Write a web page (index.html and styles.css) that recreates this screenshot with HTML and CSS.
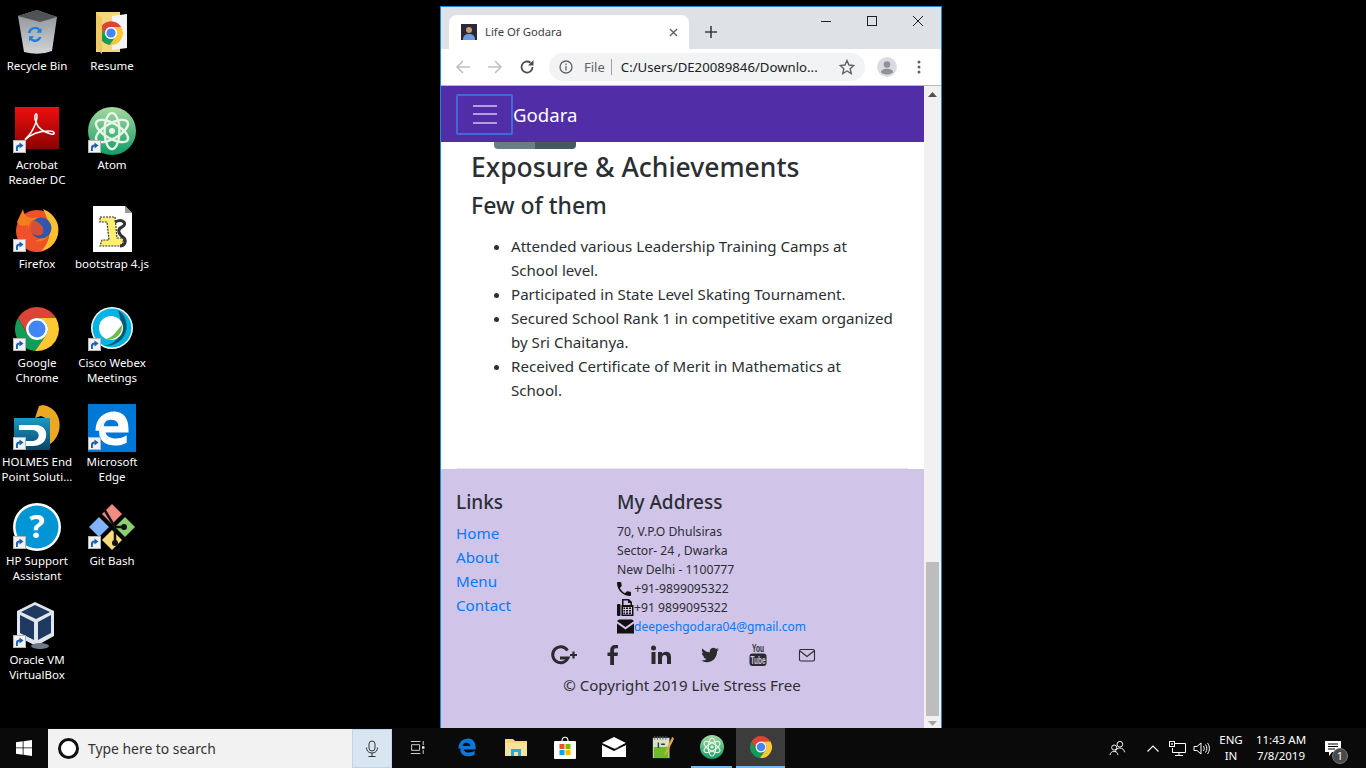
FILE: index.html
```html
<!DOCTYPE html>
<html lang="en">
  <head>
    <meta charset="UTF-8" />
    <title>Life Of Godara</title>
    <link rel="stylesheet" href="styles.css">
  </head>
  <body>
    <svg class="defs" width="0" height="0">
      <defs>
        <linearGradient id="atomGreen" x1="0" y1="0" x2="0" y2="1"><stop offset="0" stop-color="#a5d8a0"/><stop offset="1" stop-color="#0f9d68"/></linearGradient>
        <linearGradient id="pdfRed" x1="0" y1="0" x2="0" y2="1"><stop offset="0" stop-color="#f00d0d"/><stop offset="1" stop-color="#8a0202"/></linearGradient>
        <linearGradient id="binGray" x1="0" y1="0" x2="0" y2="1"><stop offset="0" stop-color="#8b8f92"/><stop offset="1" stop-color="#d3d6d8"/></linearGradient>
        <linearGradient id="holmesBlue" x1="0" y1="0" x2="0" y2="1"><stop offset="0" stop-color="#1b9ac4"/><stop offset="1" stop-color="#0c4468"/></linearGradient>
        <symbol id="chrome" viewBox="0 0 48 48">
          <path fill="#db4437" d="M5 13A22 22 0 0 1 43 13H24A11 11 0 0 0 14.500 29.500Z"/>
          <path fill="#0f9d58" d="M5 13A22 22 0 0 0 22 46L33.500 29.500A11 11 0 0 1 14.500 29.500Z"/>
          <path fill="#fcc934" d="M43 13A22 22 0 0 1 22 46L33.500 29.500A11 11 0 0 0 24 13Z"/>
          <circle cx="24" cy="24" r="11" fill="#fff"/>
          <circle cx="24" cy="24" r="8.500" fill="#4285f4"/>
        </symbol>
        <symbol id="atom" viewBox="0 0 48 48">
          <circle cx="24" cy="24" r="24" fill="url(#atomGreen)"/>
          <g fill="none" stroke="#e6f5e6" stroke-width="2.400">
            <ellipse cx="24" cy="24" rx="18" ry="7.500" transform="rotate(30 24 24)"/>
            <ellipse cx="24" cy="24" rx="18" ry="7.500" transform="rotate(-30 24 24)"/>
            <ellipse cx="24" cy="24" rx="18" ry="7.500" transform="rotate(90 24 24)"/>
          </g>
          <circle cx="24" cy="24" r="3" fill="#e6f5e6"/>
        </symbol>
        <symbol id="edge-e" viewBox="0 0 48 48">
          <path d="M6 27C6 13 16 6 26 6c10 0 16 7 16 19v4H17c1 7 14 9 23 3v8c-11 6-30 4-30-11 0-6 3-10 8-13-2 2-3 4-3 6h16c0-4-3-7-8-7-6 0-12 5-13 12z"/>
        </symbol>
        <symbol id="shortcut" viewBox="0 0 13 13">
          <rect width="13" height="13" fill="#f2f2f2"/>
          <rect x=".5" y=".5" width="12" height="12" fill="none" stroke="#b5b5b5"/>
          <path d="M3 11V7.500C3 5.500 4.500 4.500 6.500 4.500V2.500L10.500 5.500 6.500 8.500V6.500C5.500 6.500 4.500 7.500 5 11Z" fill="#1b5fb0"/>
        </symbol>
      </defs>
    </svg>

    <div class="desktop">
      <div class="desk-icon">
        <div class="desk-pic">
          <svg viewBox="0 0 48 48"><path d="M5 8 24 2 44 9 39 43Q26 48 11 44Z" fill="url(#binGray)"/><path d="M5 8 24 2 44 9 27 14Z" fill="#4f5356"/><path d="M15 23a8 8 0 0 1 13-5l-3 4h8v-8l-2 2a12 12 0 0 0-20 6zM18 32l3-4h-8v8l2-2a11 11 0 0 0 18-5h-4a8 8 0 0 1-11 3z" fill="#1a7fe0" transform="translate(8 11) scale(.62)"/></svg>
        </div>
        <span>Recycle Bin</span>
      </div>
      <div class="desk-icon">
        <div class="desk-pic">
          <svg viewBox="0 0 48 48"><path d="M8 4H32V44H8Z" fill="#f5d67d"/><path d="M24 8 39 6V40L24 42Z" fill="#f4f4f4"/><use href="#chrome" x="10" y="12" width="26" height="26"/><path d="M8 4 14 10V46L8 40Z" fill="#f0c860"/></svg>
        </div>
        <span>Resume</span>
      </div>
      <div class="desk-icon">
        <div class="desk-pic">
          <svg viewBox="0 0 48 48"><rect width="44" height="42" x="0" y="0" fill="url(#pdfRed)" transform="translate(2 0)"/><path d="M12 32C18 28 24 16 24 9 24 4 20 8 23 15 25 21 30 25 38 27 43 28 42 24 36 24 28 24 19 26 12 33" fill="none" stroke="#fff" stroke-width="1.500"/></svg>
          <svg class="shortcut"><use href="#shortcut"/></svg>
        </div>
        <span>Acrobat<br>Reader DC</span>
      </div>
      <div class="desk-icon">
        <div class="desk-pic">
          <svg viewBox="0 0 48 48"><use href="#atom"/></svg>
          <svg class="shortcut"><use href="#shortcut"/></svg>
        </div>
        <span>Atom</span>
      </div>
      <div class="desk-icon">
        <div class="desk-pic">
          <svg viewBox="0 0 48 48"><circle cx="24" cy="25" r="21" fill="#f0502a"/><path d="M30 3C42 8 47 18 45 28 43 38 36 43 28 45 38 36 40 22 30 3Z" fill="#fbc02d"/><path d="M4 16 10 3C11 9 14 12 20 12 30 10 38 16 37 26 36 33 28 37 22 35 30 33 31 27 26 25 20 24 14 26 15 19 9 21 5 19 4 16Z" fill="#f57c1f"/><circle cx="28" cy="22" r="10.500" fill="#3057b0"/><path d="M20 14C26 16 32 20 30 27 27 31 20 30 16 24 15 19 17 16 20 14Z" fill="#f04e23" opacity=".85"/></svg>
          <svg class="shortcut"><use href="#shortcut"/></svg>
        </div>
        <span>Firefox</span>
      </div>
      <div class="desk-icon">
        <div class="desk-pic">
          <svg viewBox="0 0 48 48"><path d="M5 0H37L44 7V46H5Z" fill="#fff"/><path d="M37 0V7H44Z" fill="#9a9a9a"/><path d="M12 11H27L29 32 36 32 34 40H12L14 34 21 34 19 16H12Z" fill="#ffee70" stroke="#333" stroke-width="1.200" stroke-dasharray="2 1"/><path d="M27 16C35 12 40 18 34 21 29 23 30 28 36 32 39 36 36 40 32 40" fill="none" stroke="#333" stroke-width="3"/></svg>
        </div>
        <span>bootstrap 4.js</span>
      </div>
      <div class="desk-icon">
        <div class="desk-pic">
          <svg viewBox="0 0 48 48"><use href="#chrome"/></svg>
          <svg class="shortcut"><use href="#shortcut"/></svg>
        </div>
        <span>Google<br>Chrome</span>
      </div>
      <div class="desk-icon">
        <div class="desk-pic">
          <svg viewBox="0 0 48 48"><circle cx="24" cy="23" r="21" fill="#fff"/><circle cx="24" cy="23" r="19.500" fill="#00b4e4"/><path d="M30 5A19.500 19.500 0 0 1 14 40C28 42 38 28 30 5Z" fill="#075a70"/><circle cx="23" cy="23" r="12" fill="#fff"/><path d="M34 20C35 30 26 37 15 34 25 34 28 26 34 20Z" fill="#6cbb45"/></svg>
          <svg class="shortcut"><use href="#shortcut"/></svg>
        </div>
        <span>Cisco Webex<br>Meetings</span>
      </div>
      <div class="desk-icon">
        <div class="desk-pic">
          <svg viewBox="0 0 48 48"><path d="M30 1C46 4 50 20 44 32 40 40 32 44 26 44L34 32C38 24 36 14 28 12L22 14 26 2Z" fill="#eda823"/><rect x="1" y="14" width="36" height="32" fill="url(#holmesBlue)"/><path d="M6 21H22C32 21 34 28 33 33 32 39 26 42 20 42H12V37H19C28 37 28 26 19 26H6Z" fill="#fff"/></svg>
          <svg class="shortcut"><use href="#shortcut"/></svg>
        </div>
        <span>HOLMES End<br>Point Soluti...</span>
      </div>
      <div class="desk-icon">
        <div class="desk-pic">
          <svg viewBox="0 0 48 48"><rect width="48" height="48" fill="#0078d7"/><use href="#edge-e" fill="#fff" x="2" y="2" width="44" height="44"/></svg>
          <svg class="shortcut"><use href="#shortcut"/></svg>
        </div>
        <span>Microsoft<br>Edge</span>
      </div>
      <div class="desk-icon">
        <div class="desk-pic">
          <svg viewBox="0 0 48 48"><circle cx="24" cy="24" r="24" fill="#fff"/><circle cx="24" cy="24" r="21.500" fill="#0096d6"/><text x="24" y="35" text-anchor="middle" class="hp-mark">?</text></svg>
          <svg class="shortcut"><use href="#shortcut"/></svg>
        </div>
        <span>HP Support<br>Assistant</span>
      </div>
      <div class="desk-icon">
        <div class="desk-pic">
          <svg viewBox="0 0 48 48"><path d="M24 2 34 12 24 22 14 12Z" fill="#f28b82" transform="translate(0 -1)"/><path d="M12 14 22 24 12 34 2 24Z" fill="#7fb2f7" transform="translate(-1 0)"/><path d="M36 14 46 24 36 34 26 24Z" fill="#8bcf72" transform="translate(1 0)"/><path d="M24 26 34 36 24 46 14 36Z" fill="#f7dc7a" transform="translate(0 1)"/><path d="M16 6 27 24V40M27 24 36 24" fill="none" stroke="#111" stroke-width="2.500"/><circle cx="27" cy="40" r="3" fill="#111"/><circle cx="36" cy="24" r="3" fill="#111"/></svg>
          <svg class="shortcut"><use href="#shortcut"/></svg>
        </div>
        <span>Git Bash</span>
      </div>
      <div class="desk-icon">
        <div class="desk-pic">
          <svg viewBox="0 0 48 48"><path d="M22 0 41 9V34L23 44 4 34V9Z" fill="#dfe6ee"/><path d="M22 3 37 10 23 17 8 10Z" fill="#20395e"/><path d="M7 13 21 20V38L7 31ZM25 20 38 13V31L25 38Z" fill="#1f3a60"/><ellipse cx="27" cy="44" rx="9" ry="3" fill="#6d7a88"/></svg>
          <svg class="shortcut"><use href="#shortcut"/></svg>
        </div>
        <span>Oracle VM<br>VirtualBox</span>
      </div>
    </div>

    <div class="browser">
      <div class="tabstrip">
        <div class="tab">
          <svg class="favicon" viewBox="0 0 16 16"><rect width="16" height="16" fill="#2a2a33"/><circle cx="8" cy="6" r="3" fill="#c89a80"/><path d="M2 16C2 11 5 10 8 10s6 1 6 6Z" fill="#6d9be0"/></svg>
          <span class="tab-title">Life Of Godara</span>
          <svg class="tab-close" viewBox="0 0 10 10"><path d="M1 1 9 9M9 1 1 9" stroke="#5f6368" stroke-width="1.500"/></svg>
        </div>
        <svg class="new-tab" viewBox="0 0 12 12"><path d="M6 0V12M0 6H12" stroke="#3c4043" stroke-width="1.600"/></svg>
        <div class="win-controls">
          <svg viewBox="0 0 46 12"><path d="M18 6.500H28" stroke="#222"/></svg>
          <svg viewBox="0 0 46 12"><rect x="18.500" y="1.500" width="9" height="9" fill="none" stroke="#222"/></svg>
          <svg viewBox="0 0 46 12"><path d="M18 1 28 11M28 1 18 11" stroke="#222"/></svg>
        </div>
      </div>
      <div class="toolbar">
        <svg class="tool" viewBox="0 0 16 16"><path d="M15 8H2M8 2 2 8 8 14" fill="none" stroke="#bdc1c6" stroke-width="1.600"/></svg>
        <svg class="tool" viewBox="0 0 16 16"><path d="M1 8H14M8 2 14 8 8 14" fill="none" stroke="#bdc1c6" stroke-width="1.600"/></svg>
        <svg class="tool" viewBox="0 0 16 16"><path d="M13.500 8A5.500 5.500 0 1 1 11.500 3.800" fill="none" stroke="#4a4d50" stroke-width="1.800"/><path d="M14.500 1V6.500H9Z" fill="#4a4d50"/></svg>
        <div class="omnibox">
          <svg class="info" viewBox="0 0 14 14"><circle cx="7" cy="7" r="6" fill="none" stroke="#5f6368" stroke-width="1.300"/><path d="M7 6V10.500M7 3.500V5" stroke="#5f6368" stroke-width="1.300"/></svg>
          <span class="scheme">File</span>
          <span class="omni-sep"></span>
          <span class="url">C:/Users/DE20089846/Downlo...</span>
          <svg class="star" viewBox="0 0 16 16"><path d="M8 1.500 10 6 14.800 6.500 11.200 9.700 12.200 14.500 8 12 3.800 14.500 4.800 9.700 1.200 6.500 6 6Z" fill="none" stroke="#5f6368" stroke-width="1.400"/></svg>
        </div>
        <svg class="avatar" viewBox="0 0 20 20"><circle cx="10" cy="10" r="10" fill="#dadce0"/><circle cx="10" cy="7.500" r="3.300" fill="#8f9296"/><path d="M4 15.500C4 12.500 7 11.800 10 11.800s6 .7 6 3.700C14 17 12 17.500 10 17.500S6 17 4 15.500Z" fill="#8f9296"/></svg>
        <svg class="dots" viewBox="0 0 4 14"><circle cx="2" cy="2" r="1.500" fill="#5f6368"/><circle cx="2" cy="7" r="1.500" fill="#5f6368"/><circle cx="2" cy="12" r="1.500" fill="#5f6368"/></svg>
      </div>
      <div class="viewport">
        <div class="page">
          <nav class="navbar">
            <button class="toggler"><span></span><span></span><span></span></button>
            <span class="brand">Godara</span>
          </nav>
          <div class="pill"><i></i><i></i></div>
          <main class="content">
            <h2>Exposure &amp; Achievements</h2>
            <h3>Few of them</h3>
            <ul>
              <li>Attended various Leadership Training Camps at School level.</li>
              <li>Participated in State Level Skating Tournament.</li>
              <li>Secured School Rank 1 in competitive exam organized by Sri Chaitanya.</li>
              <li>Received Certificate of Merit in Mathematics at School.</li>
            </ul>
          </main>
          <hr class="rule">
          <footer class="footer">
            <div class="foot-cols">
              <div class="foot-links">
                <h5>Links</h5>
                <a href="#">Home</a>
                <a href="#">About</a>
                <a href="#">Menu</a>
                <a href="#">Contact</a>
              </div>
              <div class="foot-address">
                <h5>My Address</h5>
                <p>70, V.P.O Dhulsiras</p>
                <p>Sector- 24 , Dwarka</p>
                <p>New Delhi - 1100777</p>
                <p><svg class="addr-ico" viewBox="3 3 18 18"><path d="M6.620 10.790c1.440 2.830 3.760 5.140 6.590 6.590l2.200-2.200c.27-.27.67-.36 1.020-.24 1.120.37 2.330.57 3.570.57.55 0 1 .45 1 1V20c0 .55-.45 1-1 1-9.390 0-17-7.610-17-17 0-.55.45-1 1-1h3.500c.55 0 1 .45 1 1 0 1.250.2 2.450.57 3.570.11.35.03.74-.25 1.020l-2.200 2.200z"/></svg>&nbsp;+91-9899095322</p>
                <p><svg class="addr-ico wide" viewBox="0 0 17 17"><rect x="0" y="5" width="3.500" height="12" rx="1"/><path d="M5 0H12L15 3V6H16.500V17H4.500V6H5ZM6.500 1.500V6H13.500V4H11V1.500Z" fill-rule="evenodd"/><path d="M6 8H15V15.500H6Z" fill="#d1c4e9"/><path d="M6.500 8.500H8V10H6.500ZM9 8.500H11V10H9ZM12 8.500H14V10H12ZM6.500 11H8V12.500H6.500ZM9 11H11V12.500H9ZM12 11H14V12.500H12ZM6.500 13.500H8V15H6.500ZM9 13.500H11V15H9ZM12 13.500H14V15H12Z"/></svg>+91 9899095322</p>
                <p><svg class="addr-ico wide" viewBox="0 0 17 14"><path d="M0 1.500 2 0H15L17 1.500 8.500 7.500Z"/><path d="M0 4 8.500 10 17 4V14H0Z"/></svg><a href="#">deepeshgodara04@gmail.com</a></p>
              </div>
            </div>
            <div class="socials">
              <svg viewBox="0 0 30 20"><path d="M18.500 5.500A8 8 0 1 0 19 13H11" fill="none" stroke="#292b2c" stroke-width="3"/><path d="M24.500 6.500V13.500M21 10H28" stroke="#292b2c" stroke-width="2.200"/></svg>
              <svg viewBox="0 0 30 20"><path d="M16 20V11H19.500L20 7.500H16V5.500C16 4 16.700 3.300 18 3.300H20V0H17C14 0 12.200 2 12.200 5V7.500H9.500V11H12.200V20Z" fill="#292b2c"/></svg>
              <svg viewBox="0 0 30 20"><circle cx="7.500" cy="3" r="2.500" fill="#292b2c"/><path d="M5.500 7H9.500V19H5.500ZM12 7H16V8.800C17 7.400 18.400 6.700 20 6.700 23.500 6.700 25 8.800 25 12.500V19H21V13C21 11 20.300 10 18.700 10 17 10 16 11.200 16 13V19H12Z" fill="#292b2c"/></svg>
              <svg viewBox="-6 -3 36 30"><path d="M23.953 4.570a10 10 0 01-2.825.775 4.958 4.958 0 002.163-2.723c-.951.555-2.005.959-3.127 1.184a4.920 4.920 0 00-8.384 4.482C7.690 8.095 4.067 6.130 1.640 3.162a4.822 4.822 0 00-.666 2.475c0 1.710.870 3.213 2.188 4.096a4.904 4.904 0 01-2.228-.616v.060a4.923 4.923 0 003.946 4.827 4.996 4.996 0 01-2.212.085 4.936 4.936 0 004.604 3.417 9.867 9.867 0 01-6.102 2.105c-.39 0-.779-.023-1.170-.067a13.995 13.995 0 007.557 2.209c9.053 0 13.998-7.496 13.998-13.985 0-.21 0-.42-.015-.63A9.935 9.935 0 0024 4.590z" fill="#292b2c"/></svg>
              <svg viewBox="0 0 30 22"><text x="15" y="8" text-anchor="middle" class="yt-you" textLength="12" lengthAdjust="spacingAndGlyphs">You</text><rect x="6.500" y="9.500" width="17" height="12.500" rx="3" fill="#292b2c"/><text x="15" y="19.500" text-anchor="middle" class="yt-tube" textLength="15" lengthAdjust="spacingAndGlyphs">Tube</text></svg>
              <svg viewBox="0 0 30 20"><rect x="7.500" y="4.500" width="15" height="11.500" rx="1.500" fill="none" stroke="#292b2c" stroke-width="1.100"/><path d="M8 6 15 11.500 22 6" fill="none" stroke="#292b2c" stroke-width="1.100"/></svg>
            </div>
            <p class="copyright">© Copyright 2019 Live Stress Free</p>
          </footer>
        </div>
        <div class="scrollbar">
          <svg class="arrow" viewBox="0 0 9 5"><path d="M4.500 0 9 5H0Z" fill="#505050"/></svg>
          <div class="thumb"></div>
          <svg class="arrow" viewBox="0 0 9 5"><path d="M4.500 5 9 0H0Z" fill="#a3a3a3"/></svg>
        </div>
      </div>
    </div>

    <div class="taskbar">
      <div class="start">
        <svg viewBox="0 0 16 16"><path d="M0 2.300 6.700 1.300V7.500H0ZM7.500 1.200 16 0V7.500H7.500ZM0 8.300H6.700V14.700L0 13.700ZM7.500 8.300H16V16L7.500 14.800Z" fill="#fff"/></svg>
      </div>
      <div class="search">
        <span class="cortana"></span>
        <span class="search-text">Type here to search</span>
        <div class="mic">
          <svg viewBox="0 0 14 18"><rect x="4" y="1" width="6" height="10" rx="3" fill="none" stroke="#333"/><path d="M1.500 7.500C1.500 11 3.500 13 7 13s5.500-2 5.500-5.500M7 13V16.500M3.500 16.500H10.500" fill="none" stroke="#333"/></svg>
        </div>
      </div>
      <div class="task-item task-view">
        <svg viewBox="0 0 20 16"><path d="M1 .5H13M1 15.500H13M2 4.500H12V11.500H2ZM16.500 0V5M16.500 11V16" fill="none" stroke="#fff"/><rect x="15" y="6.500" width="3" height="3" fill="#fff"/></svg>
      </div>
      <div class="task-item">
        <svg viewBox="0 0 48 48"><use href="#edge-e" fill="#0a78d7" x="1" y="1" width="46" height="46"/></svg>
      </div>
      <div class="task-item">
        <svg viewBox="0 0 24 20"><path d="M1 2H9L11 4H23V19H1Z" fill="#f6d775"/><path d="M1 6H23V19H1Z" fill="#fbe29a"/><path d="M7 19V12H17V19H14V15H10V19Z" fill="#29a9e0"/></svg>
      </div>
      <div class="task-item">
        <svg viewBox="0 0 24 24"><path d="M9 6C9 1 15 1 15 6" fill="none" stroke="#fff" stroke-width="1.200"/><rect x="1" y="6" width="22" height="18" rx="1" fill="#fff"/><rect x="6.500" y="9" width="5" height="5" fill="#f25022"/><rect x="12.500" y="9" width="5" height="5" fill="#7fba00"/><rect x="6.500" y="15" width="5" height="5" fill="#00a4ef"/><rect x="12.500" y="15" width="5" height="5" fill="#ffb900"/></svg>
      </div>
      <div class="task-item">
        <svg viewBox="0 0 24 20"><path d="M0 6 12 0 24 6 13 12Z" fill="#fff"/><path d="M0 8 12 14 24 8V20H0Z" fill="#fff"/><path d="M4 20 13 11 24 8V6L12 12Z" fill="#000"/></svg>
      </div>
      <div class="task-item">
        <svg viewBox="0 0 24 26"><path d="M1 3H19V25H1Z" fill="#d8e0c8"/><path d="M2 13H18V25H2Z" fill="#6cbb2a"/><path d="M3 1V5M6 1V5M9 1V5M12 1V5M15 1V5" stroke="#555" stroke-width="1"/><path d="M7 8V14M10 10H14" stroke="#333" stroke-width="1.500"/><path d="M22 2 14 19 13 22 16 20 24 4Z" fill="#e8a33c"/></svg>
      </div>
      <div class="task-item running">
        <svg viewBox="0 0 48 48"><use href="#atom"/></svg>
      </div>
      <div class="task-item active">
        <svg viewBox="0 0 48 48"><use href="#chrome"/></svg>
      </div>
      <div class="tray">
        <div class="tray-item people">
          <svg viewBox="0 0 18 16"><circle cx="11.500" cy="4" r="3" fill="none" stroke="#fff"/><path d="M6.500 12.500C7 9.500 9 8 11.500 8s4.500 1.500 5 4.500" fill="none" stroke="#fff"/><circle cx="5.500" cy="7.500" r="2.700" fill="none" stroke="#fff"/><path d="M1 15.500C1.500 13 3 11.500 5.500 11.500S9 13 9.500 15.500" fill="none" stroke="#fff"/></svg>
        </div>
        <div class="tray-item chevron">
          <svg viewBox="0 0 12 7"><path d="M.5 6.500 6 1 11.500 6.500" fill="none" stroke="#fff" stroke-width="1.100"/></svg>
        </div>
        <div class="tray-item net">
          <svg viewBox="0 0 17 15"><path d="M5.500 2.500H16.500V11.500H3.500V7M10 11.500V14.500M6 14.500H14" fill="none" stroke="#fff"/><rect x=".5" y=".5" width="5" height="5" fill="#000" stroke="#fff"/><path d="M2 2 4 4M4 2 2 4" stroke="#fff" stroke-width=".7"/></svg>
        </div>
        <div class="tray-item net">
          <svg viewBox="0 0 17 15"><path d="M1 5.500H4L8 2V13L4 9.500H1Z" fill="none" stroke="#fff"/><path d="M10.500 5C11.500 6.500 11.500 8.500 10.500 10M12.500 3.500C14.300 5.500 14.300 9.500 12.500 11.500M14.500 2C17 5 17 10 14.500 13" fill="none" stroke="#fff"/></svg>
        </div>
        <div class="tray-text lang">ENG<br>IN</div>
        <div class="tray-text clock">11:43 AM<br>7/8/2019</div>
        <div class="tray-item notify">
          <svg viewBox="0 0 16 15"><path d="M0 0H16V11H7L4 15V11H0Z" fill="#fff"/><path d="M3 3H13M3 5.500H13M3 8H10" stroke="#000"/></svg>
          <span class="badge">1</span>
        </div>
      </div>
    </div>
  </body>
</html>
```

FILE: styles.css
```css
* {
  box-sizing: border-box;
}
html,
body {
  margin: 0;
  height: 768px;
  overflow: hidden;
}
body {
  position: relative;
  display: flex;
  flex-direction: column;
  background-color: #000;
  font-family: "Noto Sans", "Open Sans", sans-serif;
  color: #2b2f33;
}
.defs {
  position: absolute;
}

/* desktop */
.desktop {
  height: 728px;
  padding-top: 8px;
  display: grid;
  grid-template-rows: repeat(7, 99px);
  grid-template-columns: 74px 76px;
  justify-content: start;
}
.desk-icon {
  display: flex;
  flex-direction: column;
  align-items: center;
  color: #fff;
  font-size: 11.5px;
  line-height: 15px;
  text-align: center;
  white-space: nowrap;
}
.desk-pic {
  position: relative;
  width: 48px;
  height: 48px;
  margin-bottom: 2px;
}
.desk-pic > svg:first-child {
  display: block;
  width: 48px;
  height: 48px;
}
.shortcut {
  position: absolute;
  left: 0;
  bottom: 2px;
  width: 13px;
  height: 13px;
}
.hp-mark {
  font-family: "Noto Sans", sans-serif;
  font-size: 32px;
  font-weight: 700;
  fill: #fff;
}

/* browser window */
.browser {
  position: absolute;
  left: 440px;
  top: 6px;
  width: 502px;
  height: 722px;
  display: flex;
  flex-direction: column;
  border: 1px solid #1a8ad4;
  border-bottom: 0;
  background-color: #fff;
}
.tabstrip {
  height: 42px;
  flex: none;
  display: flex;
  align-items: flex-end;
  padding-left: 8px;
  background-color: #dee1e6;
  position: relative;
}
.tab {
  width: 240px;
  height: 34px;
  display: flex;
  align-items: center;
  padding: 0 11px 0 12px;
  background-color: #fff;
  border-radius: 8px 8px 0 0;
}
.favicon {
  width: 16px;
  height: 16px;
}
.tab-title {
  margin: 0 0 2px 8px;
  flex: 1;
  font-size: 11.3px;
  color: #3c4043;
}
.tab-close {
  width: 9px;
  height: 9px;
}
.new-tab {
  width: 12px;
  height: 12px;
  margin: 0 0 11px 16px;
}
.win-controls {
  position: absolute;
  top: 8px;
  right: 0;
  display: flex;
}
.win-controls svg {
  width: 46px;
  height: 12px;
  display: block;
}
.toolbar {
  height: 37px;
  flex: none;
  display: flex;
  align-items: center;
  padding: 0 0 0 14px;
  background-color: #fff;
  border-bottom: 1px solid #b9babc;
}
.tool {
  width: 16px;
  height: 16px;
  margin-right: 16px;
}
.omnibox {
  width: 316px;
  height: 28px;
  margin-left: -2px;
  display: flex;
  align-items: center;
  padding: 0 10px 0 10px;
  background-color: #f1f3f4;
  border-radius: 14px;
  font-size: 13px;
  white-space: nowrap;
}
.info {
  width: 14px;
  height: 14px;
  margin-right: 11px;
}
.scheme {
  color: #5f6368;
}
.omni-sep {
  width: 1px;
  height: 16px;
  margin: 0 9px 0 6px;
  background-color: #9aa0a6;
}
.url {
  flex: 1;
  font-size: 13.2px;
  color: #202124;
}
.star {
  width: 16px;
  height: 16px;
}
.avatar {
  width: 20px;
  height: 20px;
  margin-left: 12px;
}
.dots {
  width: 4px;
  height: 14px;
  margin-left: 20px;
}

/* page inside the window */
.viewport {
  flex: 1;
  min-height: 0;
  display: flex;
}
.page {
  width: 483px;
  display: flex;
  flex-direction: column;
  background-color: #fff;
}
.navbar {
  height: 56px;
  flex: none;
  display: flex;
  align-items: center;
  padding-left: 15px;
  background-color: #512da8;
}
.toggler {
  width: 57px;
  height: 41px;
  padding: 0;
  display: flex;
  flex-direction: column;
  align-items: center;
  justify-content: center;
  gap: 6.5px;
  background: none;
  border: 2px solid #4169d8;
  border-radius: 2px;
}
.toggler span {
  width: 24px;
  height: 2px;
  background-color: #b39ddb;
}
.brand {
  font-size: 18.6px;
  color: #fff;
}
.pill {
  width: 82px;
  height: 7px;
  margin-left: 53px;
  display: flex;
  border-radius: 0 0 4px 4px;
  overflow: hidden;
  flex: none;
}
.pill i {
  flex: 1;
  background-color: #6a7e85;
}
.pill i + i {
  background-color: #455a5f;
}
.content {
  flex: 1;
  padding: 1px 30px 0;
}
.content h2 {
  margin: 0 0 7px;
  font-size: 26.5px;
  font-weight: 500;
  line-height: 34px;
}
.content h3 {
  margin: 0 0 14px;
  font-size: 23px;
  font-weight: 500;
  line-height: 29px;
}
.content ul {
  margin: 0;
  padding-left: 40px;
  font-size: 15.1px;
  line-height: 24px;
}
.rule {
  margin: 0 16px;
  border: 0;
  border-top: 1px solid #e6e6e6;
  flex: none;
}
.footer {
  height: 259px;
  flex: none;
  padding: 21px 16px 0 15px;
  background-color: #d1c4e9;
}
.foot-cols {
  display: flex;
}
.foot-links {
  width: 161px;
  display: flex;
  flex-direction: column;
  align-items: flex-start;
  line-height: 24px;
  font-size: 15.2px;
}
.footer h5 {
  margin: 0 0 7px;
  font-size: 19px;
  font-weight: 500;
  line-height: 24px;
}
.footer a {
  color: #007bff;
  text-decoration: none;
}
.foot-address {
  font-size: 12.2px;
}
.foot-address a {
  font-size: 12px;
}
.foot-address h5 {
  margin-bottom: 8px;
}
.foot-address p {
  margin: 0;
  height: 19px;
  line-height: 19px;
  display: flex;
  align-items: center;
  white-space: nowrap;
}
.addr-ico {
  width: 14px;
  height: 14px;
  fill: #111;
}
.addr-ico.wide {
  width: 17px;
  height: 17px;
}
.socials {
  display: flex;
  justify-content: center;
  gap: 18.5px;
  margin-top: 8px;
  padding-left: 7px;
}
.socials svg {
  width: 30px;
  height: 22px;
}
.yt-you {
  font-family: "Liberation Sans", sans-serif;
  font-size: 10px;
  font-weight: 700;
  fill: #292b2c;
}
.yt-tube {
  font-family: "Liberation Sans", sans-serif;
  font-size: 10px;
  font-weight: 700;
  fill: #d1c4e9;
}
.copyright {
  margin: 7px 0 0;
  text-align: center;
  font-size: 15.1px;
  line-height: 24px;
}
.scrollbar {
  width: 17px;
  display: flex;
  flex-direction: column;
  align-items: center;
  background-color: #f1f1f1;
}
.arrow {
  width: 9px;
  height: 5px;
  margin: 6px 0;
  flex: none;
}
.thumb + .arrow {
  margin: 5px 0 2px;
}
.thumb {
  width: 13px;
  height: 154px;
  margin-top: auto;
  background-color: #bdbdbd;
}

/* taskbar */
.taskbar {
  height: 40px;
  flex: none;
  display: flex;
  background-color: #0a0a0a;
  color: #fff;
}
.start {
  width: 48px;
  display: flex;
  align-items: center;
  justify-content: center;
}
.start svg {
  width: 16px;
  height: 16px;
}
.search {
  width: 344px;
  margin: 1px 1px 0 0;
  display: flex;
  align-items: center;
  padding-left: 10px;
  background-color: #f2f2f2;
  color: #333;
  font-size: 13.9px;
}
.cortana {
  width: 21px;
  height: 21px;
  border: 3px solid #111;
  border-radius: 50%;
  background-color: #fff;
}
.search-text {
  margin-left: 9px;
  flex: 1;
}
.mic {
  width: 40px;
  height: 100%;
  display: flex;
  align-items: center;
  justify-content: center;
  background-color: #d9e6f2;
  border: 1px solid #bcd5ec;
}
.mic svg {
  width: 14px;
  height: 18px;
}
.task-item {
  width: 49px;
  display: flex;
  align-items: center;
  justify-content: center;
  padding-bottom: 2px;
}
.task-item svg {
  width: 24px;
  height: 24px;
}
.task-view svg {
  width: 16px;
  height: 13px;
}
.task-item.running {
  background: linear-gradient(#76b9ed, #76b9ed) center bottom / 41px 2px no-repeat;
}
.task-item.active {
  background-color: #3c3c3c;
  border-bottom: 2px solid #76b9ed;
  padding-bottom: 0;
}
.tray {
  margin-left: auto;
  padding-right: 13px;
  display: flex;
  align-items: stretch;
}
.tray-item {
  display: flex;
  align-items: center;
  justify-content: center;
  position: relative;
}
.people {
  width: 36px;
}
.people svg {
  width: 17px;
  height: 16px;
}
.chevron {
  width: 24px;
  margin-left: 6px;
}
.chevron svg {
  width: 12px;
  height: 7px;
}
.net {
  width: 24px;
}
.net svg {
  width: 17px;
  height: 15px;
}
.tray-text {
  text-align: center;
  font-size: 11.500px;
  line-height: 16px;
  padding-top: 4px;
  white-space: nowrap;
}
.lang {
  width: 36px;
}
.clock {
  width: 64px;
}
.notify {
  width: 40px;
}
.notify svg {
  width: 16px;
  height: 15px;
}
.badge {
  position: absolute;
  left: 19px;
  top: 20px;
  width: 16px;
  height: 16px;
  border-radius: 50%;
  background-color: #4a4a4a;
  border: 1px solid #777;
  font-size: 11px;
  line-height: 14px;
  text-align: center;
}
```
